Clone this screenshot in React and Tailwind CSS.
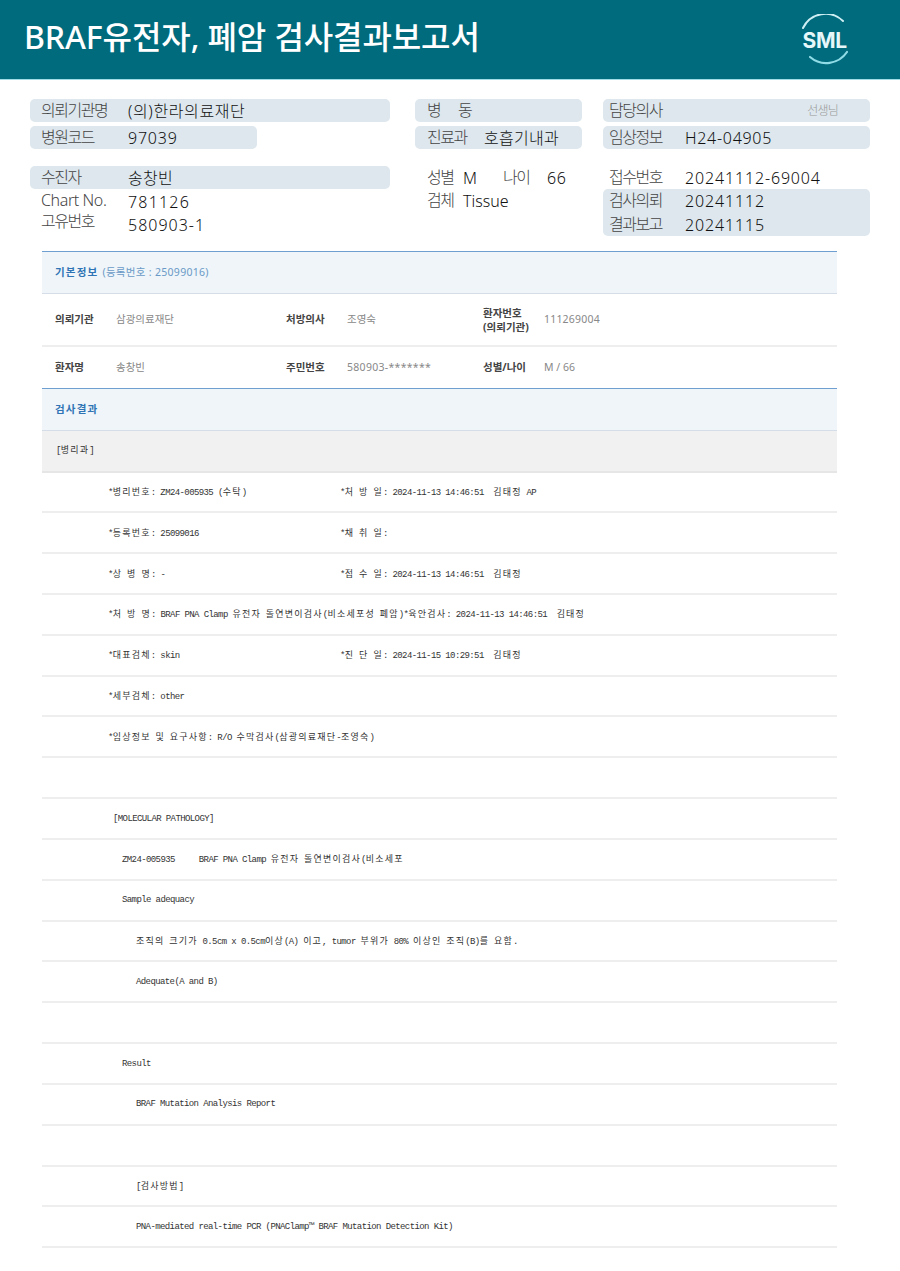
const sans = "font-['Noto_Sans','Noto_Sans_CJK_KR',sans-serif]"

const resultRows = [
  { indent: "pl-[66px]", left: "*병리번호: ZM24-005935 (수탁)", right: "*처 방 일: 2024-11-13 14:46:51  김태정 AP" },
  { indent: "pl-[66px]", left: "*등록번호: 25099016", right: "*채 취 일:" },
  { indent: "pl-[66px]", left: "*상 병 명: -", right: "*접 수 일: 2024-11-13 14:46:51  김태정" },
  { indent: "pl-[66px]", left: "*처 방 명: BRAF PNA Clamp 유전자 돌연변이검사(비소세포성 폐암)", right: "*육안검사: 2024-11-13 14:46:51  김태정", inline: true },
  { indent: "pl-[66px]", left: "*대표검체: skin", right: "*진 단 일: 2024-11-15 10:29:51  김태정" },
  { indent: "pl-[66px]", left: "*세부검체: other" },
  { indent: "pl-[66px]", left: "*임상정보 및 요구사항: R/O 수막검사(삼광의료재단-조영숙)" },
  { indent: "pl-[66px]", left: "" },
  { indent: "pl-[71px]", left: "[MOLECULAR PATHOLOGY]" },
  { indent: "pl-[80px]", left: "ZM24-005935     BRAF PNA Clamp 유전자 돌연변이검사(비소세포" },
  { indent: "pl-[80px]", left: "Sample adequacy" },
  { indent: "pl-[94px]", left: "조직의 크기가 0.5cm x 0.5cm이상(A) 이고, tumor 부위가 80% 이상인 조직(B)를 요함." },
  { indent: "pl-[94px]", left: "Adequate(A and B)" },
  { indent: "pl-[94px]", left: "" },
  { indent: "pl-[80px]", left: "Result" },
  { indent: "pl-[94px]", left: "BRAF Mutation Analysis Report" },
  { indent: "pl-[94px]", left: "" },
  { indent: "pl-[94px]", left: "[검사방법]" },
  { indent: "pl-[94px]", left: "PNA-mediated real-time PCR (PNAClamp™ BRAF Mutation Detection Kit)" },
]

// hangul is twice as wide as latin in the original fixed-width font
function Mono({ text }) {
  const parts = text.split(/([\uac00-\ud7a3]+)/)
  return (
    <span className="font-['Liberation_Mono',monospace] text-[9px] tracking-[-0.6px] leading-none whitespace-pre text-[#333]">
      {parts.map((part, i) =>
        /[\uac00-\ud7a3]/.test(part) ? (
          <span key={i} className="font-['Noto_Sans_CJK_KR',sans-serif] text-[9px] tracking-[1.2px]">{part}</span>
        ) : (
          <span key={i}>{part}</span>
        )
      )}
    </span>
  )
}

function ResultRow({ row }) {
  return (
    <div className={`flex items-center h-[40.83px] pt-[1px] border-b-2 border-[#eeeeee] ${row.indent}`}>
      {row.inline ? (
        <>
          <Mono text={row.left} />
          <Mono text={row.right} />
        </>
      ) : (
        <>
          <div className="w-[232px] shrink-0 flex whitespace-nowrap"><Mono text={row.left} /></div>
          {row.right && <Mono text={row.right} />}
        </>
      )}
    </div>
  )
}

function Pill({ className = "", children }) {
  return (
    <div className={`flex items-center h-[23px] rounded-[5px] bg-[#dde7ed] ${className}`}>
      {children}
    </div>
  )
}

function Label({ className = "", children }) {
  return <span className={`font-light text-[#444] -translate-y-px ${className}`}>{children}</span>
}

function Value({ className = "", children }) {
  return <span className={`font-light text-[#111] ${className}`}>{children}</span>
}

function Logo() {
  return (
    <svg width="50" height="52" viewBox="0 0 50 52" fill="none">
      <path d="M3 14 A25 25 0 0 1 43 7" stroke="#cdeef2" strokeWidth="2" strokeLinecap="round" />
      <path d="M10 43 A25 25 0 0 0 47 38" stroke="#8fdbe6" strokeWidth="2.2" strokeLinecap="round" />
      <text x="2.5" y="34" fill="#e6f7f9" fontFamily="Inter, sans-serif" fontWeight="700" fontSize="21" letterSpacing="-0.3">SML</text>
    </svg>
  )
}

export default function App() {
  return (
    <div className={`w-[900px] h-[1271px] overflow-hidden bg-white ${sans}`}>
      <header className="flex items-center justify-between h-[80px] bg-[#006b7c] border-b border-[#9fdde6] pl-[24px] pr-[50px]">
        <h1 className="text-[32px] leading-none font-medium text-white tracking-[-0.1px] -mt-[5px]">BRAF유전자, 폐암 검사결과보고서</h1>
        <Logo />
      </header>

      <section className="flex pt-[19px] pl-[30px] text-[16px] leading-none h-[171px]">
        <div className="w-[360px] flex flex-col">
          <Pill>
            <Label className="w-[98px] pl-[11px] tracking-[-1.5px]">의뢰기관명</Label>
            <Value className="tracking-[0.6px]">(의)한라의료재단</Value>
          </Pill>
          <Pill className="w-[227px] mt-[4px]">
            <Label className="w-[98px] pl-[11px] tracking-[-1.5px]">병원코드</Label>
            <Value className="tracking-[0.8px]">97039</Value>
          </Pill>
          <Pill className="mt-[17px]">
            <Label className="w-[98px] pl-[11px] tracking-[-1.5px]">수진자</Label>
            <Value className="tracking-[0.3px]">송창빈</Value>
          </Pill>
          <div className="flex items-center h-[22px] mt-[1px]">
            <Label className="w-[98px] pl-[11px] tracking-[-0.4px]">Chart No.</Label>
            <Value className="tracking-[1.2px] mt-[2px]">781126</Value>
          </div>
          <div className="flex items-center h-[20px]">
            <Label className="w-[98px] pl-[11px] tracking-[-1.5px]">고유번호</Label>
            <Value className="tracking-[1px] mt-[6px]">580903-1</Value>
          </div>
        </div>

        <div className="w-[167px] ml-[25px] flex flex-col">
          <Pill>
            <Label className="pl-[12px] tracking-[6px]">병 동</Label>
          </Pill>
          <Pill className="mt-[4px]">
            <Label className="w-[69px] pl-[12px] tracking-[-1.5px]">진료과</Label>
            <Value className="tracking-[0.3px]">호흡기내과</Value>
          </Pill>
          <div className="flex items-center h-[23px] mt-[17px]">
            <Label className="w-[48px] pl-[12px] tracking-[-1.5px]">성별</Label>
            <Value className="w-[40px]">M</Value>
            <Label className="w-[44px] tracking-[-1.5px]">나이</Label>
            <Value className="tracking-[0.5px]">66</Value>
          </div>
          <div className="flex items-center h-[23px]">
            <Label className="w-[48px] pl-[12px] tracking-[-1.5px]">검체</Label>
            <Value>Tissue</Value>
          </div>
        </div>

        <div className="w-[267px] ml-[21px] flex flex-col">
          <Pill>
            <Label className="pl-[6px] tracking-[-1.5px]">담당의사</Label>
            <span className="ml-auto mr-[32px] text-[12px] font-light text-[#999] tracking-[-0.8px]">선생님</span>
          </Pill>
          <Pill className="mt-[4px]">
            <Label className="w-[82px] pl-[6px] tracking-[-1.5px]">임상정보</Label>
            <Value className="tracking-[0.7px]">H24-04905</Value>
          </Pill>
          <div className="flex items-center h-[23px] mt-[17px]">
            <Label className="w-[82px] pl-[6px] tracking-[-1.5px]">접수번호</Label>
            <Value className="tracking-[0.85px]">20241112-69004</Value>
          </div>
          <div className="flex flex-col rounded-[5px] bg-[#dde7ed]">
            <div className="flex items-center h-[24px]">
              <Label className="w-[82px] pl-[6px] tracking-[-1.5px]">검사의뢰</Label>
              <Value className="tracking-[0.85px]">20241112</Value>
            </div>
            <div className="flex items-center h-[23px]">
              <Label className="w-[82px] pl-[6px] tracking-[-1.5px]">결과보고</Label>
              <Value className="tracking-[0.85px]">20241115</Value>
            </div>
          </div>
        </div>
      </section>

      <section className="ml-[42px] w-[795px]">
        <div className="flex items-center h-[43px] pl-[13px] bg-[#eff5f9] border-t border-[#6f9fd0] border-b border-b-[#d5dee8] text-[10.5px]">
          <b className="text-[#2f74b5] tracking-[1.2px] mr-[4px]">기본정보</b>
          <span className="text-[#6a9ac7] tracking-[0.3px]">(등록번호 : 25099016)</span>
        </div>

        <div className="flex items-center h-[53px] pl-[13px] border-b-2 border-[#eeeeee] text-[10.5px]">
          <b className="w-[61px] text-[#444]">의뢰기관</b>
          <span className="w-[170px] text-[#888]">삼광의료재단</span>
          <b className="w-[61px] text-[#444]">처방의사</b>
          <span className="w-[136px] text-[#888]">조영숙</span>
          <b className="w-[61px] text-[#444] leading-[14px]">환자번호<br />(의뢰기관)</b>
          <span className="text-[#888] tracking-[0.2px]">111269004</span>
        </div>

        <div className="flex items-center h-[41px] pl-[13px] text-[10.5px]">
          <b className="w-[61px] text-[#444]">환자명</b>
          <span className="w-[170px] text-[#888]">송창빈</span>
          <b className="w-[61px] text-[#444]">주민번호</b>
          <span className="w-[136px] text-[#888] tracking-[0.3px]">580903-*******</span>
          <b className="w-[61px] text-[#444]">성별/나이</b>
          <span className="text-[#888]">M / 66</span>
        </div>

        <div className="flex items-center h-[43px] pl-[13px] bg-[#eff5f9] border-t border-[#6f9fd0] border-b border-b-[#d5dee8] text-[10.5px]">
          <b className="text-[#2f74b5] tracking-[1.2px]">검사결과</b>
        </div>

        <div className="flex items-center h-[41.5px] pl-[14px] bg-[#f1f1f1] border-b-2 border-[#e6e6e6]">
          <Mono text="[병리과]" />
        </div>

        {resultRows.map((row, i) => (
          <ResultRow key={i} row={row} />
        ))}
      </section>
    </div>
  )
}
